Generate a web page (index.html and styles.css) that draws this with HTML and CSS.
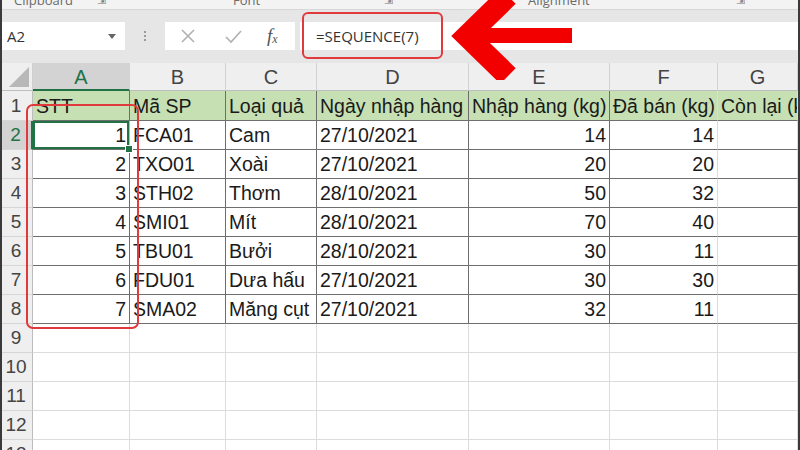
FILE: index.html
```html
<!DOCTYPE html>
<html lang="vi">
<head>
<meta charset="utf-8">
<link rel="stylesheet" href="styles.css">
</head>
<body>
<div class="app">
  <div class="ribbon">
    <div class="grp g1"><span>Clipboard</span><span class="launch">⇲</span></div>
    <div class="grp g2"><span>Font</span><span class="launch">⇲</span></div>
    <div class="grp g3"><span>Alignment</span><span class="launch">⇲</span></div>
  </div>
  <div class="fbar">
    <div class="namebox"><span>A2</span><svg class="dd" width="8" height="5" viewBox="0 0 8 5"><path d="M0 0H8L4 5Z" fill="#666"/></svg></div>
    <div class="dots"><i></i><i></i><i></i></div>
    <div class="btns">
      <svg width="16" height="16" viewBox="0 0 16 16"><path d="M2 2L14 14M14 2L2 14" stroke="#b0b0b0" stroke-width="1.6" fill="none"/></svg>
      <svg width="18" height="16" viewBox="0 0 18 16"><path d="M2 9L7 14L17 3" stroke="#b0b0b0" stroke-width="1.6" fill="none"/></svg>
      <span class="fx">f<sub>x</sub></span>
    </div>
    <div class="finput">=SEQUENCE(7)</div>
  </div>
  <div class="sheet">
    <div class="corner"><svg width="20" height="20" viewBox="0 0 20 20"><path d="M20 0V20H0Z" fill="#b8b8b8"/></svg></div>
    <div class="ch sel">A</div><div class="ch">B</div><div class="ch">C</div><div class="ch">D</div><div class="ch">E</div><div class="ch">F</div><div class="ch">G</div>

    <div class="rh">1</div>
    <div class="c t hd">STT</div><div class="c t hd db">Mã SP</div><div class="c t hd db">Loại quả</div><div class="c t hd db">Ngày nhập hàng</div><div class="c t hd db">Nhập hàng (kg)</div><div class="c t hd db">Đã bán (kg)</div><div class="c t hd">Còn lại (kg)</div>

    <div class="rh rsel">2</div>
    <div class="c t n a cur">1</div><div class="c t db">FCA01</div><div class="c t db">Cam</div><div class="c t db">27/10/2021</div><div class="c t n db">14</div><div class="c t n db">14</div><div class="c t"></div>

    <div class="rh">3</div>
    <div class="c t n a">2</div><div class="c t db">TXO01</div><div class="c t db">Xoài</div><div class="c t db">27/10/2021</div><div class="c t n db">20</div><div class="c t n db">20</div><div class="c t"></div>

    <div class="rh">4</div>
    <div class="c t n a">3</div><div class="c t db">STH02</div><div class="c t db">Thơm</div><div class="c t db">28/10/2021</div><div class="c t n db">50</div><div class="c t n db">32</div><div class="c t"></div>

    <div class="rh">5</div>
    <div class="c t n a">4</div><div class="c t db">SMI01</div><div class="c t db">Mít</div><div class="c t db">28/10/2021</div><div class="c t n db">70</div><div class="c t n db">40</div><div class="c t"></div>

    <div class="rh">6</div>
    <div class="c t n a">5</div><div class="c t db">TBU01</div><div class="c t db">Bưởi</div><div class="c t db">28/10/2021</div><div class="c t n db">30</div><div class="c t n db">11</div><div class="c t"></div>

    <div class="rh">7</div>
    <div class="c t n a">6</div><div class="c t db">FDU01</div><div class="c t db">Dưa hấu</div><div class="c t db">27/10/2021</div><div class="c t n db">30</div><div class="c t n db">30</div><div class="c t"></div>

    <div class="rh">8</div>
    <div class="c t n a">7</div><div class="c t db">SMA02</div><div class="c t db">Măng cụt</div><div class="c t db">27/10/2021</div><div class="c t n db">32</div><div class="c t n db">11</div><div class="c t"></div>

    <div class="rh">9</div><div class="c"></div><div class="c"></div><div class="c"></div><div class="c"></div><div class="c"></div><div class="c"></div><div class="c"></div>
    <div class="rh">10</div><div class="c"></div><div class="c"></div><div class="c"></div><div class="c"></div><div class="c"></div><div class="c"></div><div class="c"></div>
    <div class="rh">11</div><div class="c"></div><div class="c"></div><div class="c"></div><div class="c"></div><div class="c"></div><div class="c"></div><div class="c"></div>
    <div class="rh">12</div><div class="c"></div><div class="c"></div><div class="c"></div><div class="c"></div><div class="c"></div><div class="c"></div><div class="c"></div>
    <div class="rh">13</div><div class="c"></div><div class="c"></div><div class="c"></div><div class="c"></div><div class="c"></div><div class="c"></div><div class="c"></div>
  </div>

  <div class="mark mark-formula"></div>
  <div class="mark mark-col"></div>
  <svg class="arrow" width="140" height="80" viewBox="440 0 140 80">
    <polyline points="508,-4 467,36 508,76" fill="none" stroke="#f20000" stroke-width="22" stroke-linejoin="miter"/>
    <rect x="470" y="28" width="102" height="15" fill="#f20000"/>
  </svg>
</div>
</body>
</html>
```

FILE: styles.css
```css
* { box-sizing: border-box; }
html, body { margin: 0; padding: 0; }
body { width: 800px; height: 450px; overflow: hidden; background: #fff; }

.app {
  position: relative;
  width: 800px;
  height: 450px;
  overflow: hidden;
  border-left: 2px solid #3a3a3a;
  border-right: 2px solid #3a3a3a;
  font-family: "Liberation Sans", Arial, sans-serif;
}

/* ribbon strip (cut off at the top, as in the capture) */
.ribbon {
  height: 10px;
  overflow: hidden;
  background: #f3f3f3;
  border-bottom: 1px solid #d8d8d8;
  display: flex;
  font-family: "Open Sans", sans-serif;
  font-size: 13px;
  color: #6a6a6a;
}
.grp { display: flex; margin-top: -8px; line-height: 16px; height: 18px; flex: none; }
.grp .launch { font-size: 11px; color: #777; }
.g1 { width: 218px; padding-left: 12px; }
.g1 .launch { margin-left: 24px; }
.g2 { width: 303px; padding-left: 13px; }
.g2 .launch { margin-left: 124px; }
.g3 { padding-left: 5px; }
.g3 .launch { margin-left: 146px; }

/* formula bar */
.fbar {
  height: 53px;
  background: #e6e6e6;
  display: flex;
  align-items: flex-start;
  padding-top: 12px;
  font-family: "Open Sans", sans-serif;
}
.namebox {
  width: 123px;
  height: 28px;
  background: #fff;
  display: flex;
  align-items: center;
  justify-content: space-between;
  padding: 0 9px 0 5px;
  font-size: 15px;
  color: #333;
}
.dots {
  width: 40px;
  height: 28px;
  display: flex;
  flex-direction: column;
  align-items: center;
  justify-content: center;
  gap: 2px;
}
.dots i { width: 2px; height: 2px; background: #9a9a9a; display: block; }
.btns {
  width: 130px;
  height: 28px;
  background: #fff;
  display: flex;
  align-items: center;
  padding-left: 15px;
  gap: 27px;
}
.btns svg:nth-child(2) { margin-left: 1px; }
.fx {
  font-family: "Liberation Serif", serif;
  font-style: italic;
  font-size: 19px;
  color: #555;
  margin-left: -2px;
}
.fx sub { font-size: 12px; vertical-align: -1px; }
.finput {
  margin-left: 5px;
  flex: 1;
  height: 28px;
  background: #fff;
  font-size: 15px;
  color: #333;
  padding-left: 16px;
  line-height: 28px;
}

/* sheet grid */
.sheet {
  display: grid;
  grid-template-columns: 31px 97px 96px 91px 152px 141px 108px 80px;
  grid-template-rows: 28px 30px repeat(12, 29px);
  font-size: 19.5px;
  color: #1a1a1a;
}
.corner {
  background: #efefef;
  border-right: 1px solid #cfcfcf;
  border-bottom: 1px solid #bdbdbd;
  display: flex;
  align-items: flex-end;
  justify-content: flex-end;
  padding: 0 3px 3px 0;
}
.ch {
  background: #efefef;
  border-right: 1px solid #d2d2d2;
  border-bottom: 1px solid #bdbdbd;
  display: flex;
  align-items: center;
  justify-content: center;
  color: #444;
  font-size: 20px;
  padding-top: 2px;
}
.ch.sel {
  background: #d3d3d3;
  color: #217346;
  border-bottom: 2px solid #217346;
}
.rh {
  background: #efefef;
  border-right: 1px solid #bdbdbd;
  border-bottom: 1px solid #d6d6d6;
  display: flex;
  align-items: center;
  justify-content: center;
  color: #444;
  font-size: 19px;
  padding-right: 2px;
}
.rh.rsel {
  background: #d3d3d3;
  color: #217346;
  border-right: 2px solid #217346;
}
.c {
  border-right: 1px solid #dcdcdc;
  border-bottom: 1px solid #dcdcdc;
  display: flex;
  align-items: flex-end;
  padding: 0 3px 2px 3px;
  white-space: nowrap;
  overflow: hidden;
  line-height: 24px;
}
.c.t { border-bottom-color: #6e6e6e; }
.c.db { border-left: 1px solid #6e6e6e; margin-left: -1px; }
.c.hd { background: #c6e0b4; }
.c.n { justify-content: flex-end; }
.c.a { border-right-color: #a9bbdd; }
.c.cur {
  position: relative;
  overflow: visible;
  box-shadow: inset 0 0 0 2px #217346;
}
.c.cur::after {
  content: "";
  position: absolute;
  right: -4px;
  bottom: -4px;
  width: 6px;
  height: 6px;
  background: #217346;
  border: 1px solid #fff;
}

/* annotations */
.mark {
  position: absolute;
  border: 2px solid #e03a3c;
}
.mark-formula { left: 300px; top: 12px; width: 141px; height: 47px; border-radius: 6px; }
.mark-col { left: 24px; top: 104px; width: 113px; height: 225px; border-radius: 7px; }
.arrow { position: absolute; left: 438px; top: 0; }
```
